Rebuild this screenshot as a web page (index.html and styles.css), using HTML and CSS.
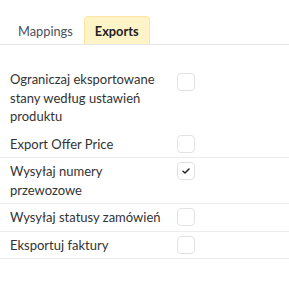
FILE: index.html
```html
<!DOCTYPE html>
<html lang="pl">
<head>
    <meta charset="UTF-8">
    <meta name="viewport" content="width=device-width, initial-scale=1.0">
    <title>Exports</title>
    <link rel="stylesheet" href="styles.css">
</head>
<body>
    <div class="tabs">
        <div class="tab">Mappings</div>
        <div class="tab active">Exports</div>
    </div>
    <div class="settings">
        <div class="row first">
            <span class="label">Ograniczaj eksportowane stany według ustawień produktu</span>
            <span class="check"></span>
        </div>
        <div class="row">
            <span class="label">Export Offer Price</span>
            <span class="check"></span>
        </div>
        <div class="row">
            <span class="label">Wysyłaj numery przewozowe</span>
            <span class="check checked">
                <svg width="10" height="10" viewBox="0 0 10 10"><path d="M2 5.2 L4 7 L8 3" fill="none" stroke="#222" stroke-width="1.5" stroke-linecap="round" stroke-linejoin="round"/></svg>
            </span>
        </div>
        <div class="row">
            <span class="label">Wysyłaj statusy zamówień</span>
            <span class="check"></span>
        </div>
        <div class="row">
            <span class="label">Eksportuj faktury</span>
            <span class="check"></span>
        </div>
    </div>
</body>
</html>
```

FILE: styles.css
```css
body {
    margin: 0;
    font-family: Lato, "Open Sans", sans-serif;
    font-size: 13px;
    color: #333;
    background: #fff;
}
.tabs {
    display: flex;
    padding: 16px 0 0 7px;
    border-bottom: 1px solid #e6e6e6;
}
.tab {
    height: 27px;
    line-height: 28px;
    padding: 0 10px;
    color: #4b505c;
    font-size: 12.8px;
    border: 1px solid transparent;
    border-bottom: none;
    border-radius: 4px 4px 0 0;
}
.tab.active {
    background: #fff4c8;
    border-color: #fbe7a1;
    color: #222;
    font-weight: bold;
}
.row {
    display: grid;
    grid-template-columns: 160px 18px;
    column-gap: 7px;
    align-items: start;
    padding: 4px 10px;
    line-height: 18.5px;
    border-bottom: 1px solid #ececec;
}
.row.first {
    margin-top: 21px;
    padding-bottom: 5px;
    border-bottom: none;
}
.check {
    width: 16px;
    height: 16px;
    border: 1px solid #e2e2e2;
    border-radius: 4px;
    display: flex;
    align-items: center;
    justify-content: center;
}
.row.first .check {
    margin-top: 3px;
}
```
